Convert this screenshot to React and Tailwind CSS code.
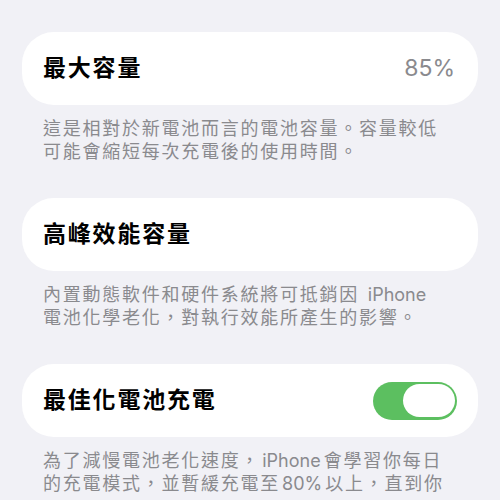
const font = { fontFamily: '"Inter", "Noto Sans CJK TC", sans-serif' }

// latin words keep normal spacing, CJK gets the wider tracking
const splitLatin = (text) =>
  text.split(/([A-Za-z0-9%]+)/).map((part, i) =>
    /^[A-Za-z0-9%]+$/.test(part) ? (
      <span key={i} className="tracking-normal pl-[2px] pr-[3px]">
        {part}
      </span>
    ) : (
      part
    )
  )

const Caption = ({ lines }) => (
  <div className="mt-[12px] px-[43px] text-[18px] leading-[23px] tracking-[1.75px] text-[#8a8a8e] whitespace-nowrap">
    {lines.map((l, i) => (
      <div key={i}>{splitLatin(l)}</div>
    ))}
  </div>
)

const Card = ({ title, children }) => (
  <div className="mx-[22px] h-[73px] rounded-[32px] bg-white flex items-center justify-between pl-[21px] pr-[21px]">
    <span className="text-[23px] font-bold tracking-[1.8px] text-black">{title}</span>
    {children}
  </div>
)

const Toggle = () => (
  <div className="w-[84px] h-[38px] rounded-full bg-[#5cbf60] flex items-center justify-end pr-[2px]">
    <div className="w-[52px] h-[33px] rounded-full bg-white" />
  </div>
)

export default function App() {
  return (
    <div className="w-[500px] h-[500px] overflow-hidden bg-[#f1f1f6] pt-[32px]" style={font}>
      <Card title="最大容量">
        <span className="text-[23px] text-[#8a8a8e] pr-[2px]">85%</span>
      </Card>
      <Caption
        lines={[
          "這是相對於新電池而言的電池容量。容量較低",
          "可能會縮短每次充電後的使用時間。",
        ]}
      />

      <div className="h-[35px]" />
      <Card title="高峰效能容量" />
      <Caption
        lines={[
          "內置動態軟件和硬件系統將可抵銷因 iPhone",
          "電池化學老化，對執行效能所產生的影響。",
        ]}
      />

      <div className="h-[35px]" />
      <Card title="最佳化電池充電">
        <Toggle />
      </Card>
      <Caption
        lines={[
          "為了減慢電池老化速度，iPhone會學習你每日",
          "的充電模式，並暫緩充電至80%以上，直到你",
        ]}
      />
    </div>
  )
}
